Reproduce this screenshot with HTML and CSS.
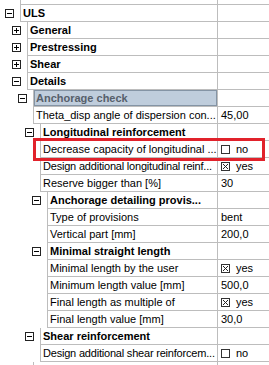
FILE: index.html
```html
<!DOCTYPE html>
<html lang="en">
<head>
  <meta charset="UTF-8" />
  <title>Properties</title>
  <link rel="stylesheet" href="styles.css">
</head>
<body>
  <div class="grid">
    <div class="row d0 stub"><span class="gut"></span><span class="name"></span><span class="val"></span></div>

    <div class="row d0 cat"><span class="gut"><i class="tog"></i></span><span class="name">ULS</span><span class="val"></span></div>
    <div class="row d1 cat"><span class="gut"><i class="tog plus"></i></span><span class="name">General</span><span class="val"></span></div>
    <div class="row d1 cat"><span class="gut"><i class="tog plus"></i></span><span class="name">Prestressing</span><span class="val"></span></div>
    <div class="row d1 cat"><span class="gut"><i class="tog plus"></i></span><span class="name">Shear</span><span class="val"></span></div>
    <div class="row d1 cat"><span class="gut"><i class="tog"></i></span><span class="name">Details</span><span class="val"></span></div>
    <div class="row d2 cat sel"><span class="gut"><i class="tog"></i></span><span class="name">Anchorage check</span><span class="val"></span></div>
    <div class="row d2"><span class="gut"></span><span class="name">Theta_disp angle of dispersion con...</span><span class="val">45,00</span></div>

    <div class="row d3 cat"><span class="gut"><i class="tog"></i></span><span class="name">Longitudinal reinforcement</span><span class="val"></span></div>
    <div class="row d3"><span class="gut"></span><span class="name">Decrease capacity of longitudinal ...</span><span class="val"><i class="cb"></i>no</span></div>
    <div class="row d3"><span class="gut"></span><span class="name tight">Design additional longitudinal reinf...</span><span class="val"><i class="cb on"><svg viewBox="0 0 7 7" width="7" height="7"><path d="M1 1L6 6M6 1L1 6" stroke="#222" stroke-width="1"/></svg></i>yes</span></div>
    <div class="row d3"><span class="gut"></span><span class="name">Reserve bigger than [%]</span><span class="val">30</span></div>

    <div class="row d4 cat"><span class="gut"><i class="tog"></i></span><span class="name">Anchorage detailing provis...</span><span class="val"></span></div>
    <div class="row d4"><span class="gut"></span><span class="name">Type of provisions</span><span class="val">bent</span></div>
    <div class="row d4"><span class="gut"></span><span class="name">Vertical part [mm]</span><span class="val">200,0</span></div>

    <div class="row d4 cat"><span class="gut"><i class="tog"></i></span><span class="name">Minimal straight length</span><span class="val"></span></div>
    <div class="row d4"><span class="gut"></span><span class="name">Minimal length by the user</span><span class="val"><i class="cb on"><svg viewBox="0 0 7 7" width="7" height="7"><path d="M1 1L6 6M6 1L1 6" stroke="#222" stroke-width="1"/></svg></i>yes</span></div>
    <div class="row d4"><span class="gut"></span><span class="name">Minimum length value [mm]</span><span class="val">500,0</span></div>
    <div class="row d4"><span class="gut"></span><span class="name">Final length as multiple of</span><span class="val"><i class="cb on"><svg viewBox="0 0 7 7" width="7" height="7"><path d="M1 1L6 6M6 1L1 6" stroke="#222" stroke-width="1"/></svg></i>yes</span></div>
    <div class="row d4"><span class="gut"></span><span class="name">Final length value [mm]</span><span class="val">30,0</span></div>

    <div class="row d3 cat"><span class="gut"><i class="tog"></i></span><span class="name">Shear reinforcement</span><span class="val"></span></div>
    <div class="row d3"><span class="gut"></span><span class="name tight">Design additional shear reinforcem...</span><span class="val"><i class="cb"></i>no</span></div>

    <div class="row d2"><span class="gut"></span><span class="name"></span><span class="val"></span></div>

    <!-- highlight drawn over the grid -->
    <div class="mark"></div>
  </div>
</body>
</html>
```

FILE: styles.css
```css
body {
  margin: 0;
  background: #ffffff;
  font-family: "Liberation Sans", Arial, sans-serif;
  font-size: 11px;
  color: #000;
  overflow: hidden;
}

.grid {
  position: relative;
  width: 269px;
  height: 365px;
  overflow: hidden;
}

.row {
  display: flex;
  height: 17px;
}

.stub {
  height: 5px;
}

.gut {
  flex: none;
  display: flex;
  align-items: center;
  justify-content: flex-end;
  padding-right: 6px;
  box-sizing: border-box;
}

.d0 .gut { width: 20px; }
.d1 .gut { width: 27px; }
.d2 .gut { width: 33px; }
.d3 .gut { width: 40px; }
.d4 .gut { width: 47px; }

.name,
.val {
  border-left: 1px solid #bdbdbd;
  border-bottom: 1px solid #bdbdbd;
  line-height: 16px;
  white-space: nowrap;
  overflow: hidden;
}

.name {
  flex: 1;
  min-width: 0;
  padding-left: 2px;
}

.name.tight {
  letter-spacing: -0.2px;
}

.val {
  flex: none;
  width: 52px;
  box-sizing: border-box;
  padding-left: 3px;
  display: flex;
  align-items: center;
}

.cat .name {
  font-weight: bold;
}

.sel .name {
  background: #bfcddc;
  color: #56606b;
  box-shadow: inset 0 0 0 1px #8494a5;
}

.tog {
  position: relative;
  display: block;
  width: 9px;
  height: 9px;
  border: 1px solid #222;
  box-sizing: border-box;
  background: #fff;
}

.tog::before {
  content: "";
  position: absolute;
  left: 1px;
  top: 3px;
  width: 5px;
  height: 1px;
  background: #000;
}

.tog.plus::after {
  content: "";
  position: absolute;
  left: 3px;
  top: 1px;
  width: 1px;
  height: 5px;
  background: #000;
}

.cb {
  display: block;
  width: 9px;
  height: 9px;
  border: 1px solid #333;
  box-sizing: border-box;
  background: #fff;
  margin-right: 6px;
}

.cb svg {
  display: block;
}

.mark {
  position: absolute;
  left: 33px;
  top: 138px;
  width: 232px;
  height: 23px;
  border: 3px solid #e1222b;
  box-sizing: border-box;
}
```
